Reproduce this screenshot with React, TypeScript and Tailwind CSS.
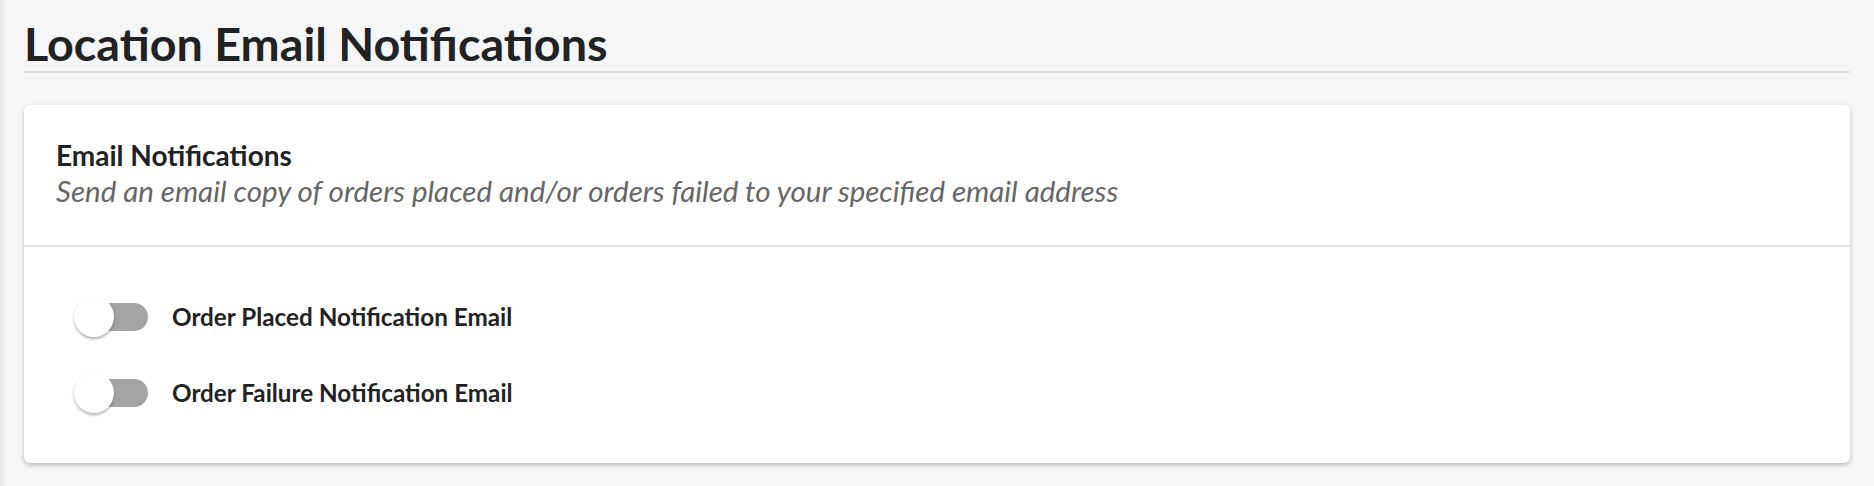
import { useState } from "react";

const Toggle: React.FC<{ label: string }> = ({ label }) => {
  const [on, setOn] = useState(false);
  return (
    <label className="flex items-center cursor-pointer select-none">
      <button
        type="button"
        onClick={() => setOn(!on)}
        className="relative w-[84px] h-[40px] shrink-0"
      >
        <span
          className={
            on
              ? "absolute left-[6px] top-[6px] w-[68px] h-[28px] rounded-full bg-[#90caf9]"
              : "absolute left-[6px] top-[6px] w-[68px] h-[28px] rounded-full bg-[#a3a3a3]"
          }
        />
        <span
          className={
            on
              ? "absolute left-[40px] top-0 w-[40px] h-[40px] rounded-full bg-[#1976d2] shadow-[0_2px_3px_rgba(0,0,0,0.3)]"
              : "absolute left-0 top-0 w-[40px] h-[40px] rounded-full bg-white shadow-[0_2px_3px_rgba(0,0,0,0.3)]"
          }
        />
      </button>
      <span className="ml-[14px] text-[24.25px] leading-[40px] font-bold text-[#222]">{label}</span>
    </label>
  );
};

export default function App() {
  return (
    <div
      className="min-h-screen bg-[#f5f6f8] px-6 pt-[16px] pb-6 shadow-[inset_10px_0_10px_-10px_rgba(0,0,0,0.12)]"
      style={{ fontFamily: "Lato, 'Noto Sans', sans-serif" }}
    >
      <h1 className="text-[46.7px] leading-[55px] font-bold text-[#222] border-b-2 border-[#dcdde0]">
        Location Email Notifications
      </h1>
      <div className="mt-[32px] bg-white rounded-md shadow-[0_2px_5px_rgba(0,0,0,0.25)]">
        <div className="px-[32px] pt-[33px] pb-[35px] border-b-2 border-[#e4e4e4]">
          <h2 className="text-[28px] leading-[34px] font-bold text-[#222]">
            Email Notifications
          </h2>
          <p className="text-[29.5px] leading-[38px] italic text-[#666]">
            Send an email copy of orders placed and/or orders failed to your specified email address
          </p>
        </div>
        <div className="pl-[50px] pt-[50px] pb-[50px] flex flex-col gap-[36px]">
          <Toggle label="Order Placed Notification Email" />
          <Toggle label="Order Failure Notification Email" />
        </div>
      </div>
    </div>
  );
}
